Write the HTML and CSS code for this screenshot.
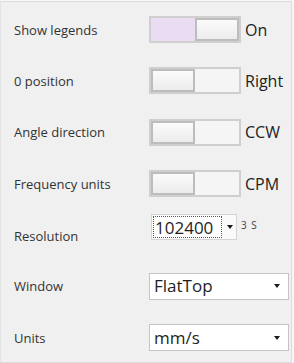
FILE: index.html
```html
<!DOCTYPE html>
<html lang="en">
<head>
    <meta charset="UTF-8">
    <meta name="viewport" content="width=device-width, initial-scale=1.0">
    <title>Settings</title>
    <link rel="stylesheet" href="styles.css">
</head>
<body>
    <div class="panel">
        <div class="row">
            <span class="label">Show legends</span>
            <div class="control">
                <div class="toggle on"><span class="thumb"></span></div>
                <span class="value">On</span>
            </div>
        </div>
        <div class="row">
            <span class="label">0 position</span>
            <div class="control">
                <div class="toggle"><span class="thumb"></span></div>
                <span class="value">Right</span>
            </div>
        </div>
        <div class="row">
            <span class="label">Angle direction</span>
            <div class="control">
                <div class="toggle"><span class="thumb"></span></div>
                <span class="value">CCW</span>
            </div>
        </div>
        <div class="row">
            <span class="label">Frequency units</span>
            <div class="control">
                <div class="toggle"><span class="thumb"></span></div>
                <span class="value">CPM</span>
            </div>
        </div>
        <div class="row resolution">
            <span class="label">Resolution</span>
            <div class="control top">
                <div class="combo small">
                    <span class="combo-text focus">102400</span>
                    <span class="arrow"></span>
                </div>
                <span class="hint">3 S</span>
            </div>
        </div>
        <div class="row">
            <span class="label">Window</span>
            <div class="control">
                <div class="combo wide">
                    <span class="combo-text">FlatTop</span>
                    <span class="arrow"></span>
                </div>
            </div>
        </div>
        <div class="row">
            <span class="label">Units</span>
            <div class="control">
                <div class="combo wide">
                    <span class="combo-text">mm/s</span>
                    <span class="arrow"></span>
                </div>
            </div>
        </div>
    </div>
</body>
</html>
```

FILE: styles.css
```css
body {
    margin: 0;
    background: #f7f7f7;
    font-family: "Open Sans", Arial, sans-serif;
}
.panel {
    box-sizing: border-box;
    width: 292px;
    height: 362px;
    margin-top: 1px;
    padding-top: 2px;
    background: #f0f0f0;
    border: 1px solid #dcdcdc;
    border-left-color: #e4e4e4;
    display: grid;
    grid-auto-rows: 51.33px;
}
.row {
    display: grid;
    grid-template-columns: 135px 1fr;
    align-items: center;
    padding-left: 13px;
}
.label {
    font-size: 13px;
    color: #333;
}
.resolution .label {
    padding-top: 2px;
}
.control {
    display: flex;
    align-items: center;
    gap: 4px;
}
.control.top {
    align-self: start;
    align-items: flex-start;
    padding-top: 5px;
}
.toggle {
    box-sizing: border-box;
    width: 92px;
    height: 27px;
    border: 2px solid #cfcfcf;
    background: #f5f5f5;
    display: flex;
    padding: 0;
}
.toggle.on {
    background: #e9dcf3;
    justify-content: flex-end;
}
.thumb {
    box-sizing: border-box;
    width: 44px;
    height: 23px;
    border: 2px solid #bdbdbd;
    background: linear-gradient(#fbfbfb, #ececec);
}
.value {
    font-size: 16px;
    color: #222;
}
.combo {
    box-sizing: border-box;
    display: flex;
    align-items: center;
    background: #fff;
    border: 1px solid #c4c4c4;
}
.combo.small {
    width: 86px;
    height: 26px;
    margin-left: 2px;
    padding: 1px;
    background: #fafafa;
    border-color: #d4d4d4;
}
.combo.wide {
    width: 140px;
    height: 27px;
    padding-left: 4px;
}
.combo-text {
    flex: 1;
    font-size: 17px;
    color: #1e1e1e;
    line-height: 22px;
}
.combo-text.focus {
    flex: none;
    width: 69px;
    height: 22px;
    box-sizing: border-box;
    border: 1px dotted #555;
    padding-left: 1px;
    background: #fff;
}
.arrow {
    width: 0;
    height: 0;
    border-left: 3.5px solid transparent;
    border-right: 3.5px solid transparent;
    border-top: 4px solid #1a1a1a;
    margin-right: 8px;
}
.combo.small .arrow {
    margin-left: 5px;
}
.hint {
    font-size: 10px;
    color: #444;
    margin-top: 4px;
    letter-spacing: 1px;
}
```
